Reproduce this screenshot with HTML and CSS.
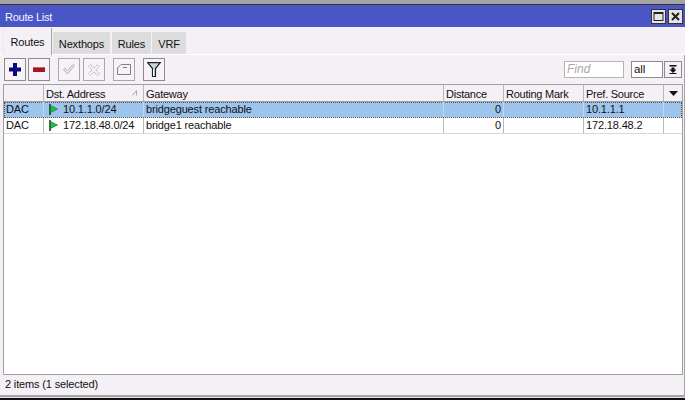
FILE: index.html
```html
<!DOCTYPE html>
<html>
<head>
<meta charset="utf-8">
<title>Route List</title>
<link rel="stylesheet" href="styles.css">
</head>
<body>
<div class="window">
  <div class="titlebar">
    <span class="title">Route List</span>
    <span class="winbtns">
      <span class="winbtn"><svg width="13" height="13" viewBox="0 0 13 13"><rect x="2" y="2.500" width="9" height="8" fill="none" stroke="#222" stroke-width="1"/><path d="M2 3h9" stroke="#222" stroke-width="2"/></svg></span>
      <span class="winbtn"><svg width="13" height="13" viewBox="0 0 13 13"><path d="M3 3l7 7M10 3l-7 7" stroke="#222" stroke-width="2"/></svg></span>
    </span>
  </div>
  <div class="tabs">
    <span class="tab active t1">Routes</span>
    <span class="tab t2">Nexthops</span>
    <span class="tab t3">Rules</span>
    <span class="tab t4">VRF</span>
  </div>
  <div class="content">
    <div class="toolbar">
      <span class="tool"><svg width="12" height="13" viewBox="0 0 12 13"><path d="M4 0h4v4.500h4v4H8V13H4V8.500H0v-4h4z" fill="#0a0a80"/></svg></span>
      <span class="tool m-a"><svg width="12" height="5" viewBox="0 0 12 5"><rect width="12" height="5" fill="#a01820"/><rect width="12" height="1" fill="#d06068"/></svg></span>
      <span class="tool disabled m-b"><svg width="12" height="11" viewBox="0 0 12 11"><path d="M0.500 5.500l4 4.500 7-8.500-1.500-1L4.500 7 2 4z" fill="#f0eef0" stroke="#b0b0b0"/></svg></span>
      <span class="tool disabled m-c"><svg width="12" height="12" viewBox="0 0 12 12"><path d="M2.500 0.500L6 4 9.500 0.500l2 2L8 6l3.500 3.500-2 2L6 8l-3.500 3.500-2-2L4 6 0.500 2.500z" fill="#f0eef0" stroke="#b0b0b0" stroke-dasharray="1.500 1"/></svg></span>
      <span class="tool disabled m-b"><svg width="14" height="11" viewBox="0 0 14 11"><path d="M0.500 10.500V4L4 0.500h9.500v10z" fill="#f4f2f4" stroke="#808080"/><path d="M6 3.500h4" stroke="#808080"/></svg></span>
      <span class="tool m-b"><svg width="14" height="15" viewBox="0 0 14 15"><path d="M0.700 0.700h12.600L8.500 6.500v8h-3v-8z" fill="#c4d8e4" stroke="#222" stroke-width="1.200"/><path d="M6.500 7v7" stroke="#fff"/></svg></span>
      <span class="spacer"></span>
      <span class="find">Find</span>
      <span class="select">all</span>
      <span class="dropbtn"><svg width="8" height="9" viewBox="0 0 8 9"><path d="M0.500 0h7v1.500h-7zM2.500 2.500h3v2h2L4 8 0.500 4.500h2zM0.500 8h7v1h-7z" fill="#111"/></svg></span>
    </div>
    <div class="table">
      <div class="row head">
        <span class="cell c1"></span>
        <span class="cell c2">Dst. Address<svg class="sort" width="6" height="6" viewBox="0 0 6 6"><path d="M0.500 5.500L4.500 0.500v5" stroke="#aaa" fill="none"/></svg></span>
        <span class="cell c3">Gateway</span>
        <span class="cell c4">Distance</span>
        <span class="cell c5">Routing Mark</span>
        <span class="cell c6">Pref. Source</span>
        <span class="cell c7"><svg width="9" height="5" viewBox="0 0 9 5"><path d="M0 0h9L4.500 5z" fill="#111"/></svg></span>
      </div>
      <div class="row selected">
        <span class="cell c1">DAC</span>
        <span class="cell c2"><svg class="flag" width="9" height="11" viewBox="0 0 9 11"><path d="M1 0v11" stroke="#0a3a1a" stroke-width="1.500"/><path d="M1.500 1.500L8.500 5l-7 3.500z" fill="#1cc044" stroke="#0a6a28" stroke-width="0.600"/></svg>10.1.1.0/24</span>
        <span class="cell c3">bridgeguest reachable</span>
        <span class="cell c4 num">0</span>
        <span class="cell c5"></span>
        <span class="cell c6">10.1.1.1</span>
        <span class="cell c7"></span>
      </div>
      <div class="row">
        <span class="cell c1">DAC</span>
        <span class="cell c2"><svg class="flag" width="9" height="11" viewBox="0 0 9 11"><path d="M1 0v11" stroke="#0a3a1a" stroke-width="1.500"/><path d="M1.500 1.500L8.500 5l-7 3.500z" fill="#1cc044" stroke="#0a6a28" stroke-width="0.600"/></svg>172.18.48.0/24</span>
        <span class="cell c3">bridge1 reachable</span>
        <span class="cell c4 num">0</span>
        <span class="cell c5"></span>
        <span class="cell c6">172.18.48.2</span>
        <span class="cell c7"></span>
      </div>
    </div>
    <div class="status">2 items (1 selected)</div>
  </div>
</div>
</body>
</html>
```
FILE: styles.css
```css
* { box-sizing: border-box; }
html, body { margin: 0; padding: 0; }
body { width: 685px; height: 400px; overflow: hidden; background: #111; font-family: "Liberation Sans", Arial, sans-serif; font-size: 11px; letter-spacing: -0.15px; color: #111; }
.window { height: 398px; padding-top: 4px; background: #a4a4a4; border-bottom: 1px solid #e0e0e0; display: flex; flex-direction: column; }
.titlebar { height: 23px; flex: none; background: #4a56c6; border-top: 1px solid #333; display: flex; align-items: center; justify-content: space-between; padding: 0 2px 0 5px; }
.title { font-size: 11px; letter-spacing: -0.25px; padding-top: 2px; color: #f4f4ff; }
.winbtns { display: flex; gap: 2px; }
.winbtn { width: 15px; height: 15px; background: #e6e4ea; border: 1px solid #333; display: flex; align-items: center; justify-content: center; }
.tabs { height: 28px; flex: none; background: #f4f0f6; display: flex; align-items: flex-end; padding-left: 3px; border-bottom: 1px solid #fff; }
.tab { height: 22px; padding-top: 5px; background: #dcdcdc; text-align: center; line-height: 14px; }
.tab.active { height: 27px; margin-bottom: -1px; background: #f4f0f6; border-right: 1px solid #a4a4a4; border-left: 1px solid #e8e8e8; padding-top: 7px; }
.t1 { width: 49px; }
.t2 { width: 57px; margin-left: 1px; }
.t3 { width: 39px; margin-left: 2px; }
.t4 { width: 34px; margin-left: 1px; }
.content { flex: 1; display: flex; flex-direction: column; background: #f4f0f6; padding: 0 1px 0 3px; border-right: 1px solid #a4a4a4; margin-bottom: 2px; min-height: 0; }
.toolbar { height: 29px; flex: none; display: flex; align-items: center; padding: 0 1px 0 1px; }
.tool { width: 22px; height: 23px; background: #f6f2f8; border: 1px solid #8c8c8c; display: flex; align-items: center; justify-content: center; }
.tool.disabled { border-color: #a8a8a8; }
.m-a { margin-left: 2px; }
.m-b { margin-left: 8px; }
.m-c { margin-left: 3px; }
.spacer { flex: 1; }
.find { width: 60px; height: 17px; background: #fff; border: 1px solid #b4b4b4; color: #a8a8a8; font-style: italic; font-size: 12px; letter-spacing: 0; padding: 0 2px; line-height: 15px; margin-right: 7px; }
.select { width: 32px; height: 17px; background: #fff; border: 1px solid #8c8c8c; padding: 0 2px; line-height: 15px; font-size: 11.500px; margin-right: 1px; }
.dropbtn { width: 18px; height: 17px; background: #f4f0f6; border: 1px solid #8c8c8c; display: flex; align-items: center; justify-content: center; }
.table { flex: 1; min-height: 0; background: #fff; border: 1px solid #a0a0a0; }
.row { display: flex; height: 16px; border-bottom: 1px solid #d8d8d8; line-height: 15px; }
.row.head { height: 17px; background: #f4f0f6; border-bottom: 1px solid #a0a0a0; line-height: 18px; letter-spacing: -0.25px; }
.row.selected { background: #9cc4ec; outline: 1px dotted #555; outline-offset: -1px; }
.cell { display: block; padding: 0 2px; border-right: 1px solid #b8b8b8; white-space: nowrap; overflow: hidden; position: relative; flex: none; }
.row.selected .cell { border-right-color: #c4d8ec; }
.c1 { width: 40px; }
.c2 { width: 100px; }
.c3 { width: 300px; }
.c4 { width: 60px; }
.c5 { width: 80px; }
.c6 { width: 80px; }
.c7 { flex: 1; border-right: 0; display: flex; align-items: center; justify-content: center; }
.num { text-align: right; }
.flag { margin: 0 5px 0 3px; vertical-align: -2px; }
.sort { position: absolute; right: 5px; top: 5px; }
.status { height: 20px; flex: none; background: #f4f0f6; padding: 2px 2px; line-height: 14px; }
```
